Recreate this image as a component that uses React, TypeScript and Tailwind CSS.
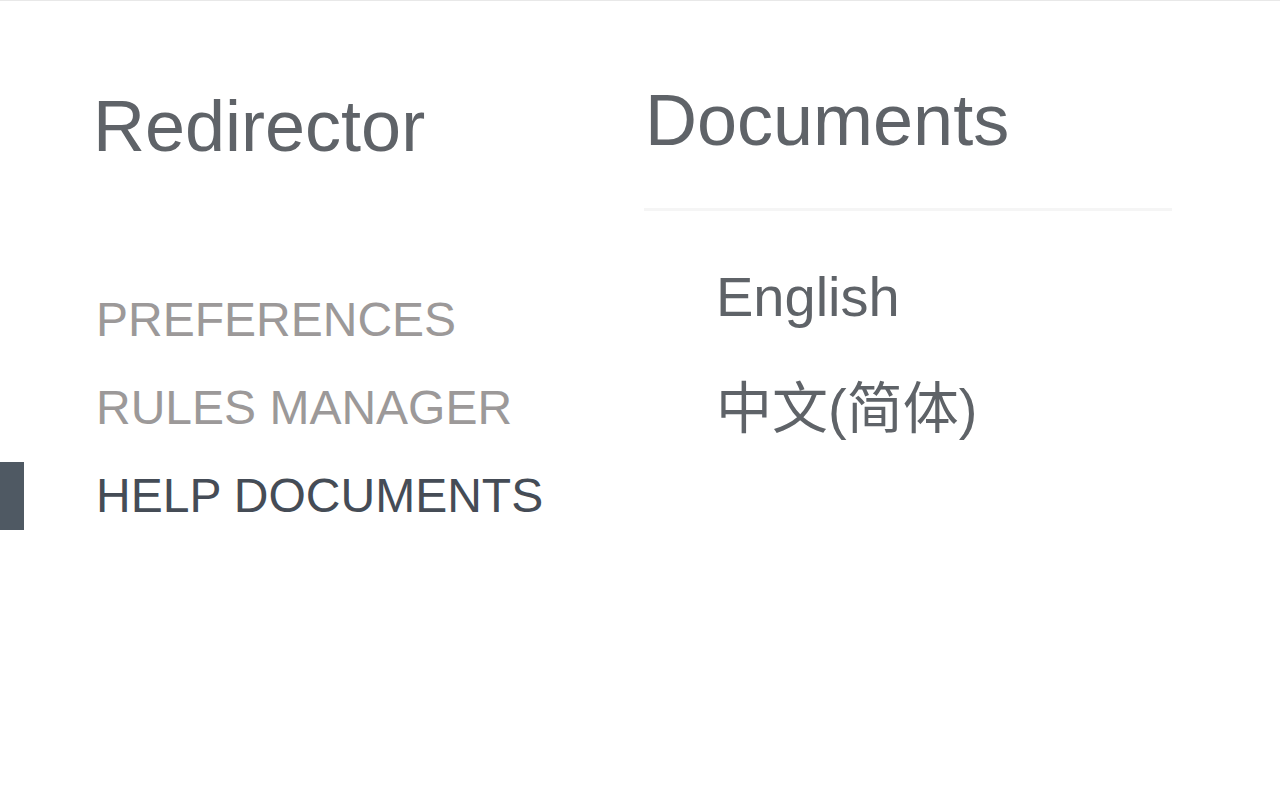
import { useState } from 'react'

type NavItem = {
  id: string
  label: string
}

const navItems: NavItem[] = [
  { id: 'preferences', label: 'PREFERENCES' },
  { id: 'rules', label: 'RULES MANAGER' },
  { id: 'help', label: 'HELP DOCUMENTS' },
]

const docs = [
  { id: 'en', label: 'English' },
  { id: 'zh', label: '中文(简体)' },
]

export default function App() {
  const [active, setActive] = useState('help')

  return (
    <div
      className="min-h-screen bg-white border-t border-[#e8e8e8] flex"
      style={{ fontFamily: '"Liberation Sans", Arial, "Noto Sans CJK SC", sans-serif' }}
    >
      {/* Sidebar */}
      <aside className="w-[644px] shrink-0 pt-[89px]">
        <h1 className="pl-[93px] text-[72px] leading-none font-normal text-[#5f6368]">
          Redirector
        </h1>

        <nav className="mt-[124px] flex flex-col gap-5">
          {navItems.map((item) => (
            <button
              key={item.id}
              onClick={() => setActive(item.id)}
              className="flex items-stretch h-[68px] text-left cursor-pointer"
            >
              <span
                className={`w-6 shrink-0 ${active === item.id ? 'bg-[#4f5963]' : 'bg-transparent'}`}
              />
              <span
                className={`ml-[72px] text-[48px] leading-[68px] ${
                  active === item.id ? 'text-[#454c56]' : 'text-[#9c9999]'
                }`}
              >
                {item.label}
              </span>
            </button>
          ))}
        </nav>
      </aside>

      {/* Content */}
      <main className="w-[528px] pt-[83px]">
        <h2 className="pl-px text-[72px] leading-none font-normal text-[#5f6368]">
          Documents
        </h2>
        <div className="mt-[52px] h-[3px] bg-[#f5f5f5]" />

        <ul className="mt-[30px] pl-[72px]">
          {docs.map((doc) => (
            <li key={doc.id} className="py-7">
              <a href="#" className="block text-[56px] leading-none text-[#5f6368]">
                {doc.label}
              </a>
            </li>
          ))}
        </ul>
      </main>
    </div>
  )
}
